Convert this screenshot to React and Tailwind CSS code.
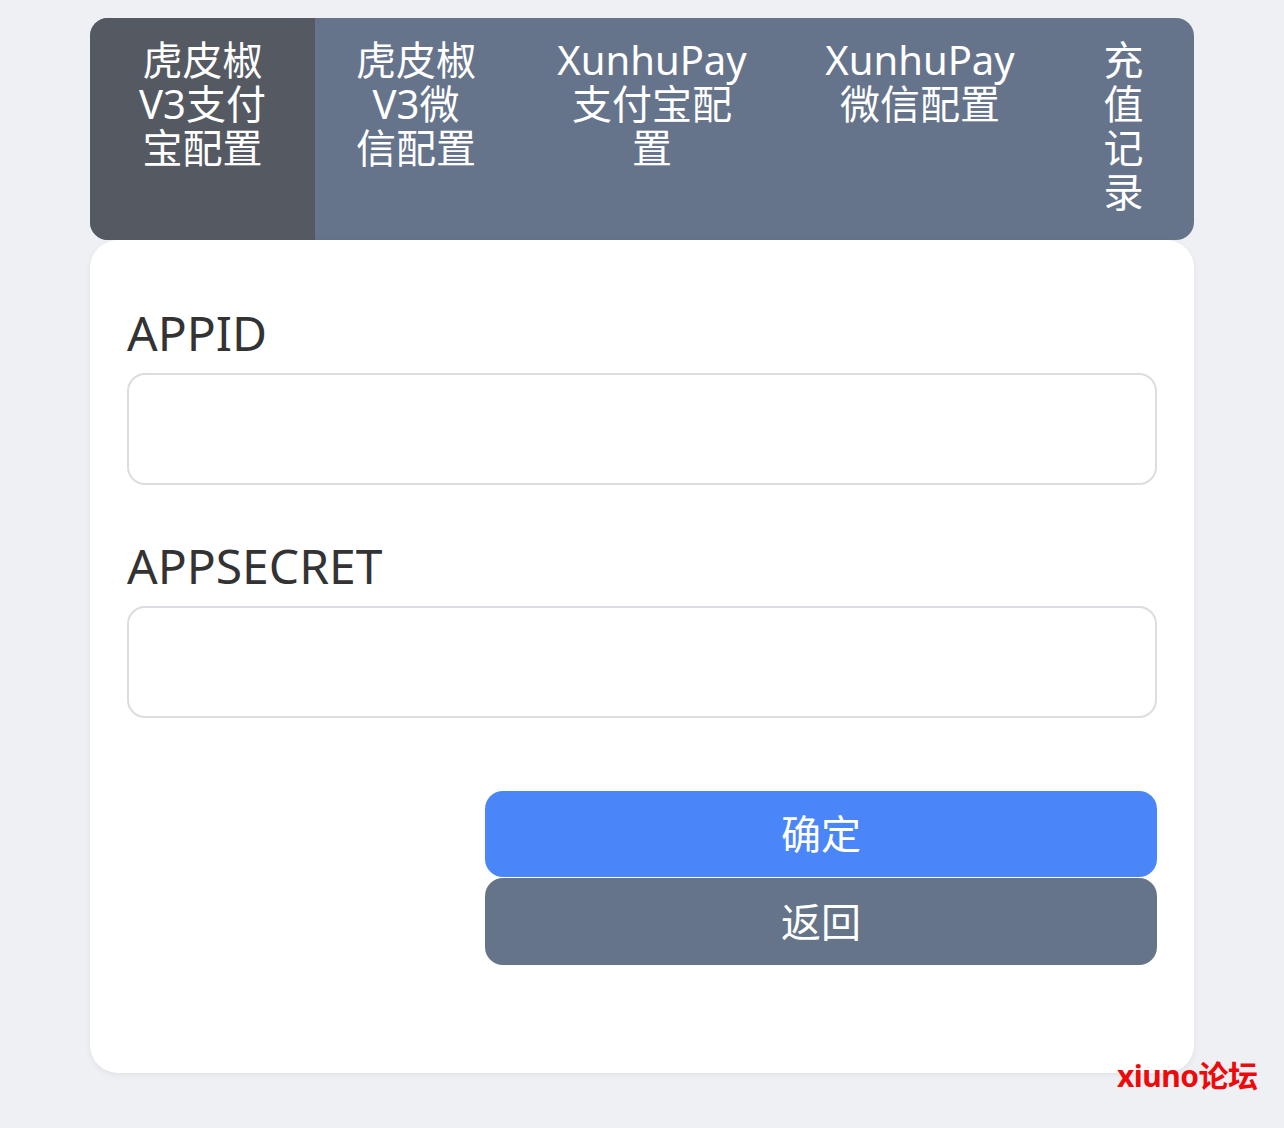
import React, { useState } from 'react';

const tabs = [
    { key: 'hpj-ali', width: 'w-[225px]', lines: ['虎皮椒', 'V3支付', '宝配置'] },
    { key: 'hpj-wx', width: 'w-[202px]', lines: ['虎皮椒', 'V3微', '信配置'] },
    { key: 'xh-ali', width: 'w-[270px]', lines: ['XunhuPay', '支付宝配', '置'] },
    { key: 'xh-wx', width: 'w-[266px]', lines: ['XunhuPay', '微信配置'] },
    { key: 'log', width: 'flex-1', lines: ['充', '值', '记', '录'] },
];

const Field = ({ label, value, onChange, className = '' }) => (
    <div className={className}>
        <label className="block text-[48px] leading-[48px] text-[#333] mb-4">{label}</label>
        <input
            type="text"
            value={value}
            onChange={(e) => onChange(e.target.value)}
            className="block w-full h-[112px] rounded-[18px] border-2 border-[#dcdde0] bg-white px-6 text-[40px] text-[#333] focus:outline-none"
        />
    </div>
);

const App = () => {
    const [active, setActive] = useState('hpj-ali');
    const [appId, setAppId] = useState('');
    const [appSecret, setAppSecret] = useState('');

    return (
        <div
            className="relative min-h-[1128px] w-full bg-[#eef0f4] pt-[18px]"
            style={{ fontFamily: '"Noto Sans", "Noto Sans CJK SC", sans-serif' }}
        >
            <div className="mx-auto w-[1104px]">
                {/* Tabs */}
                <div className="flex h-[222px] overflow-hidden rounded-[18px] bg-[#66748b]">
                    {tabs.map((tab) => (
                        <button
                            key={tab.key}
                            onClick={() => setActive(tab.key)}
                            className={`${tab.width} flex flex-col items-center pt-5 text-[40px] leading-[44px] text-white ${active === tab.key ? 'bg-[#555a62]' : ''}`}
                        >
                            {tab.lines.map((line, i) => (
                                <span key={i} className="block whitespace-nowrap">{line}</span>
                            ))}
                        </button>
                    ))}
                </div>

                {/* Form card */}
                <div className="h-[833px] rounded-[28px] bg-white px-[37px] pt-[69px] shadow-[0_2px_6px_rgba(0,0,0,0.06)]">
                    <Field label="APPID" value={appId} onChange={setAppId} />
                    <Field label="APPSECRET" value={appSecret} onChange={setAppSecret} className="mt-[57px]" />

                    <div className="ml-auto mt-[73px] flex w-[672px] flex-col gap-px">
                        <button className="h-[86px] rounded-[18px] bg-[#4a86f7] text-[40px] text-white">确定</button>
                        <button className="h-[87px] rounded-[18px] bg-[#66748a] text-[40px] text-white">返回</button>
                    </div>
                </div>
            </div>

            {/* watermark */}
            <span className="absolute left-[1117px] top-[1058px] text-[30px] font-bold leading-[36px] tracking-[-0.5px] text-[#ee0a0a]">xiuno论坛</span>
        </div>
    );
};

export default App;
